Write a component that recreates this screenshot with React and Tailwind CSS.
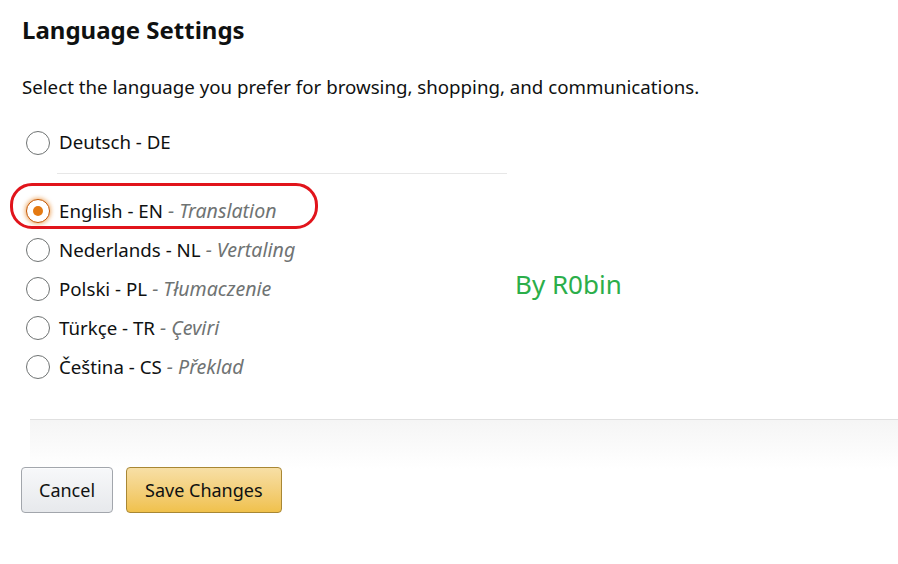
import React, { useState } from "react";

const languages = [
  { code: "de", label: "Deutsch - DE", hint: "" },
  { code: "en", label: "English - EN", hint: "Translation" },
  { code: "nl", label: "Nederlands - NL", hint: "Vertaling" },
  { code: "pl", label: "Polski - PL", hint: "Tłumaczenie" },
  { code: "tr", label: "Türkçe - TR", hint: "Çeviri" },
  { code: "cs", label: "Čeština - CS", hint: "Překlad" },
];

const Radio = ({ checked }) => (
  <span
    className={`flex h-[24px] w-[24px] shrink-0 items-center justify-center rounded-full border ${
      checked
        ? "border-[#c45500] shadow-[0_0_4px_1px_rgba(228,121,17,0.6)]"
        : "border-[#6f7373]"
    } bg-white`}
  >
    {checked && <span className="h-[10px] w-[10px] rounded-full bg-[#e47911]" />}
  </span>
);

const LanguageRow = ({ lang, checked, onSelect }) => (
  <label
    className="flex h-[39px] cursor-pointer items-center gap-[9px] pl-[4px]"
    onClick={() => onSelect(lang.code)}
  >
    <Radio checked={checked} />
    <span className="text-[18.7px] text-[#0f1111]">
      {lang.label}
      {lang.hint && (
        <span className="text-[19.6px] italic text-[#6f7373]"> - {lang.hint}</span>
      )}
    </span>
  </label>
);

const App = () => {
  const [selected, setSelected] = useState("en");
  const [first, ...rest] = languages;

  return (
    <div
      className="relative h-[564px] w-[898px] overflow-hidden bg-white"
      style={{ fontFamily: '"Noto Sans", "Open Sans", sans-serif' }}
    >
      <div className="px-[22px] pt-[12px]">
        <h1 className="text-[24px] font-bold leading-[36px] text-[#0f1111]">
          Language Settings
        </h1>

        <p className="mt-[25px] text-[18.7px] leading-[28px] text-[#0f1111]">
          Select the language you prefer for browsing, shopping, and communications.
        </p>

        <div className="mt-[22px]">
          <LanguageRow
            lang={first}
            checked={selected === first.code}
            onSelect={setSelected}
          />
          <div className="mt-[11px] mb-[17px] ml-[35px] h-px w-[450px] bg-[#e7e7e7]" />
          {rest.map((lang) => (
            <LanguageRow
              key={lang.code}
              lang={lang}
              checked={selected === lang.code}
              onSelect={setSelected}
            />
          ))}
        </div>
      </div>

      <div className="mt-[33px] ml-[30px] h-[50px] border-t border-[#e0e0e0] bg-gradient-to-b from-[#f5f5f5] to-white" />

      <div className="mt-[-2px] flex gap-[13px] px-[21px]">
        <button className="h-[46px] rounded-[4px] border border-[#a2a6ac] bg-gradient-to-b from-[#f7f8fa] to-[#e7e9ec] px-[17px] text-[18px] text-[#0f1111] shadow-[0_1px_0_rgba(255,255,255,0.6)_inset]">
          Cancel
        </button>
        <button className="h-[46px] rounded-[4px] border border-[#a88734] bg-gradient-to-b from-[#f7dfa5] to-[#f0c14b] px-[18px] text-[18px] text-[#0f1111]">
          Save Changes
        </button>
      </div>

      {/* annotations drawn over the page */}
      <div className="pointer-events-none absolute left-[10px] top-[183px] h-[46px] w-[308px] rounded-[22px] border-[3px] border-[#e1141b]" />
      <span className="pointer-events-none absolute left-[515px] top-[265px] text-[26px] text-[#2bae4a]">
        By R0bin
      </span>
    </div>
  );
};

export default App;
